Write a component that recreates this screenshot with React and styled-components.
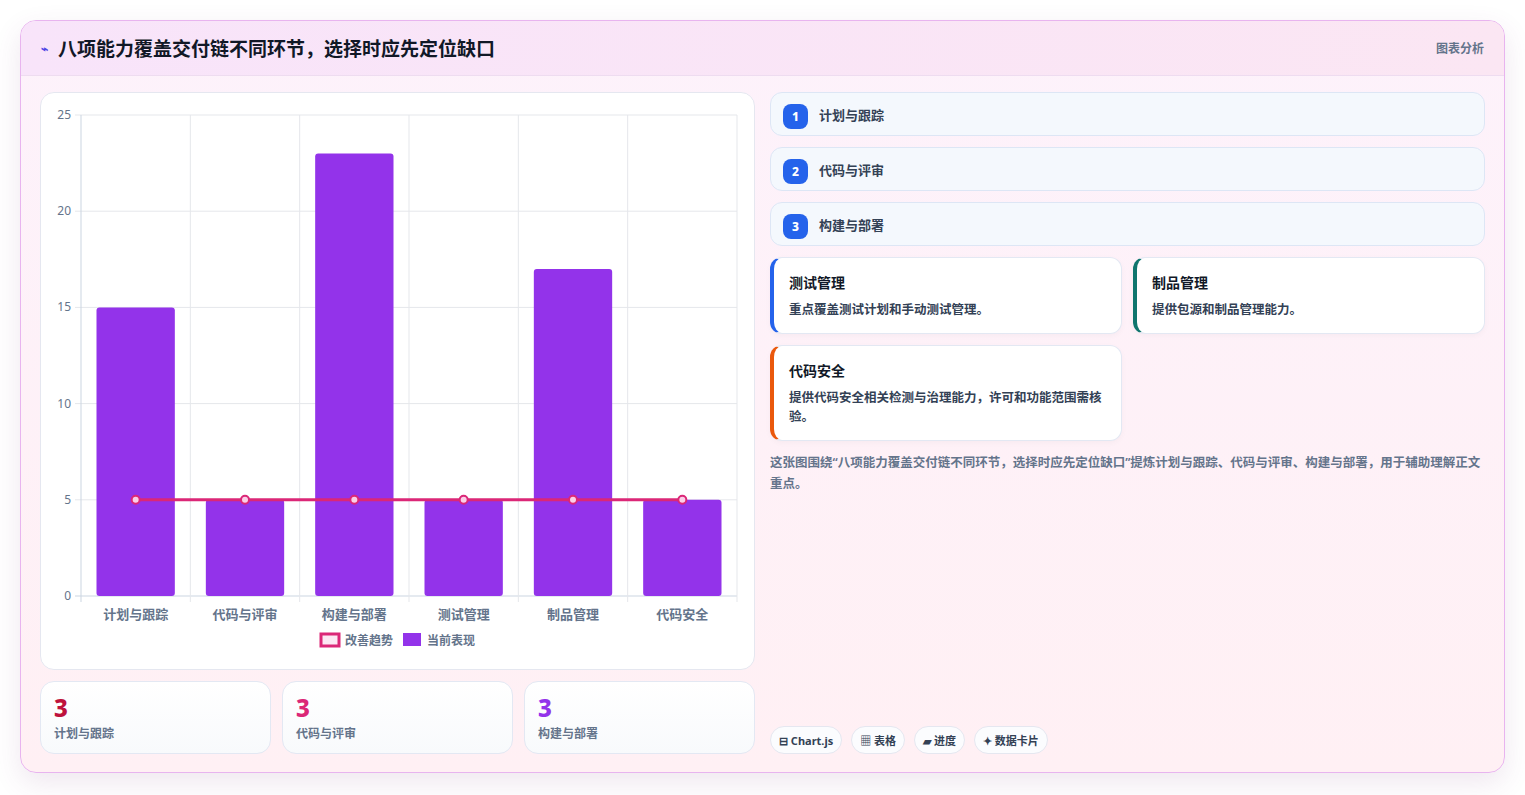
import React from 'react';
import styled, { createGlobalStyle } from 'styled-components';

const Global = createGlobalStyle`
  body { margin: 0; background: #fff; font-family: "Noto Sans", "Noto Sans CJK SC", sans-serif; }
`;

const Page = styled.div`
  padding: 20px 20px 22px 20px;
  height: 795px;
  box-sizing: border-box;
`;

const Card = styled.div`
  height: 753px;
  box-sizing: border-box;
  border: 1px solid #e8b4ef;
  border-radius: 16px;
  background: linear-gradient(180deg, #fdf2fb 0%, #fff0f4 100%);
  box-shadow: 0 10px 28px rgba(120, 60, 120, 0.12);
  display: flex;
  flex-direction: column;
  overflow: hidden;
`;

const Header = styled.div`
  height: 55px;
  flex-shrink: 0;
  box-sizing: border-box;
  display: flex;
  align-items: center;
  justify-content: space-between;
  padding: 0 20px;
  background: linear-gradient(90deg, #f8e4fa, #fbe6f3);
  border-bottom: 1px solid #eedcf0;
`;

const Title = styled.h1`
  margin: 0;
  font-size: 19px;
  font-weight: 700;
  color: #111827;
  display: flex;
  align-items: center;
  gap: 10px;
`;

const Tag = styled.span`
  font-size: 12px;
  font-weight: 600;
  color: #64748b;
`;

const Body = styled.div`
  flex: 1;
  display: grid;
  grid-template-columns: 715px 715px;
  gap: 15px;
  padding: 16px 19px 18px 19px;
  min-height: 0;
`;

const LeftCol = styled.div`
  display: flex;
  flex-direction: column;
  gap: 11px;
`;

const ChartBox = styled.div`
  height: 578px;
  box-sizing: border-box;
  background: #fff;
  border: 1px solid #e5e7f0;
  border-radius: 14px;
`;

const Stats = styled.div`
  display: grid;
  grid-template-columns: repeat(3, 1fr);
  gap: 11px;
`;

const Stat = styled.div`
  height: 73px;
  box-sizing: border-box;
  border: 1px solid #e3e8f3;
  border-radius: 14px;
  background: linear-gradient(180deg, #ffffff, #f8fafc);
  padding: 10px 13px;
`;

const StatNum = styled.div`
  font-size: 24px;
  font-weight: 800;
  line-height: 32px;
  color: ${p => p.color};
`;

const StatLabel = styled.div`
  font-size: 12px;
  font-weight: 600;
  color: #64748b;
`;

const RightCol = styled.div`
  display: flex;
  flex-direction: column;
  gap: 11px;
`;

const Step = styled.div`
  height: 44px;
  box-sizing: border-box;
  border: 1px solid #dde6f5;
  border-radius: 12px;
  background: #f4f8fd;
  display: flex;
  align-items: center;
  gap: 11px;
  padding: 0 12px;
  font-size: 13px;
  font-weight: 600;
  color: #334155;
`;

const Badge = styled.span`
  width: 25px;
  height: 25px;
  border-radius: 8px;
  background: #2563eb;
  color: #fff;
  font-size: 12px;
  font-weight: 800;
  display: flex;
  align-items: center;
  justify-content: center;
  margin-top: 4px;
`;

const Grid = styled.div`
  display: grid;
  grid-template-columns: 1fr 1fr;
  gap: 11px;
`;

const Info = styled.div`
  background: #fff;
  border: 1px solid #e3e8f3;
  border-left: 4px solid ${p => p.accent};
  border-radius: 12px;
  padding: 14px 16px 14px 15px;
  min-height: 77px;
  box-sizing: border-box;
  box-shadow: 0 2px 6px rgba(0,0,0,0.03);
`;

const InfoTitle = styled.div`
  font-size: 14px;
  font-weight: 700;
  color: #111827;
  margin-bottom: 8px;
`;

const InfoText = styled.div`
  font-size: 12.5px;
  font-weight: 600;
  color: #334155;
  line-height: 19px;
`;

const Note = styled.p`
  margin: 0;
  font-size: 12.5px;
  font-weight: 600;
  line-height: 21px;
  color: #64748b;
`;

const Chips = styled.div`
  margin-top: auto;
  display: flex;
  gap: 9px;
`;

const Chip = styled.span`
  height: 28px;
  box-sizing: border-box;
  border: 1px solid #e5e7f0;
  border-radius: 14px;
  background: #fbfcfe;
  padding: 0 8px;
  display: flex;
  align-items: center;
  gap: 3px;
  font-size: 11px;
  font-weight: 700;
  color: #334155;
`;

const cats = ['计划与跟踪', '代码与评审', '构建与部署', '测试管理', '制品管理', '代码安全'];
const vals = [15, 5, 23, 5, 17, 5];

function Chart() {
  const x0 = 40, x1 = 696, y0 = 22, y1 = 503;
  const h = y1 - y0;
  const cw = (x1 - x0) / 6;
  const y = v => y1 - (v / 25) * h;
  return (
    <svg width="715" height="578" style={{ display: 'block' }}>
      {[0, 5, 10, 15, 20, 25].map(v => (
        <g key={v}>
          <line x1={x0 - 6} x2={x1} y1={y(v)} y2={y(v)} stroke={v === 0 ? '#cbd5e1' : '#e5e7eb'} />
          <text x={x0 - 10} y={y(v) + 4} textAnchor="end" fontSize="12" fill="#64748b" fontFamily="Noto Sans">{v}</text>
        </g>
      ))}
      {Array.from({ length: 7 }).map((_, i) => (
        <line key={i} x1={x0 + i * cw} x2={x0 + i * cw} y1={y0} y2={y1 + 6} stroke={i === 0 ? '#cbd5e1' : '#e5e7eb'} />
      ))}
      {vals.map((v, i) => (
        <rect key={i} x={x0 + i * cw + 15.5} width={cw - 31} y={y(v)} height={y1 - y(v)} rx="3" fill="#9333ea" />
      ))}
      <polyline points={vals.map((_, i) => `${x0 + i * cw + cw / 2},${y(5)}`).join(' ')} fill="none" stroke="#db2777" strokeWidth="3" />
      {vals.map((_, i) => (
        <circle key={i} cx={x0 + i * cw + cw / 2} cy={y(5)} r="4" fill="#fbcfe8" stroke="#db2777" strokeWidth="2" />
      ))}
      {cats.map((c, i) => (
        <text key={c} x={x0 + i * cw + cw / 2} y={y1 + 23} textAnchor="middle" fontSize="13" fontWeight="600" fill="#64748b" fontFamily="Noto Sans CJK SC">{c}</text>
      ))}
      <rect x="280" y="541" width="18" height="12" fill="#fce7f3" stroke="#db2777" strokeWidth="3" />
      <text x="304" y="552" fontSize="12" fontWeight="600" fill="#64748b" fontFamily="Noto Sans CJK SC">改善趋势</text>
      <rect x="362" y="540" width="18" height="13" fill="#9333ea" />
      <text x="386" y="552" fontSize="12" fontWeight="600" fill="#64748b" fontFamily="Noto Sans CJK SC">当前表现</text>
    </svg>
  );
}

export default function App() {
  return (
    <Page>
      <Global />
      <Card>
        <Header>
          <Title><span style={{ color: '#4f46e5', fontSize: 12 }}>⌁</span>八项能力覆盖交付链不同环节，选择时应先定位缺口</Title>
          <Tag>图表分析</Tag>
        </Header>
        <Body>
          <LeftCol>
            <ChartBox><Chart /></ChartBox>
            <Stats>
              <Stat><StatNum color="#be123c">3</StatNum><StatLabel>计划与跟踪</StatLabel></Stat>
              <Stat><StatNum color="#db2777">3</StatNum><StatLabel>代码与评审</StatLabel></Stat>
              <Stat><StatNum color="#9333ea">3</StatNum><StatLabel>构建与部署</StatLabel></Stat>
            </Stats>
          </LeftCol>
          <RightCol>
            <Step><Badge>1</Badge>计划与跟踪</Step>
            <Step><Badge>2</Badge>代码与评审</Step>
            <Step><Badge>3</Badge>构建与部署</Step>
            <Grid>
              <Info accent="#2563eb"><InfoTitle>测试管理</InfoTitle><InfoText>重点覆盖测试计划和手动测试管理。</InfoText></Info>
              <Info accent="#0f766e"><InfoTitle>制品管理</InfoTitle><InfoText>提供包源和制品管理能力。</InfoText></Info>
              <Info accent="#ea580c"><InfoTitle>代码安全</InfoTitle><InfoText>提供代码安全相关检测与治理能力，许可和功能范围需核验。</InfoText></Info>
            </Grid>
            <Note>这张图围绕“八项能力覆盖交付链不同环节，选择时应先定位缺口”提炼计划与跟踪、代码与评审、构建与部署，用于辅助理解正文重点。</Note>
            <Chips>
              <Chip>⊟ Chart.js</Chip>
              <Chip>▦ 表格</Chip>
              <Chip>▰ 进度</Chip>
              <Chip>✦ 数据卡片</Chip>
            </Chips>
          </RightCol>
        </Body>
      </Card>
    </Page>
  );
}
